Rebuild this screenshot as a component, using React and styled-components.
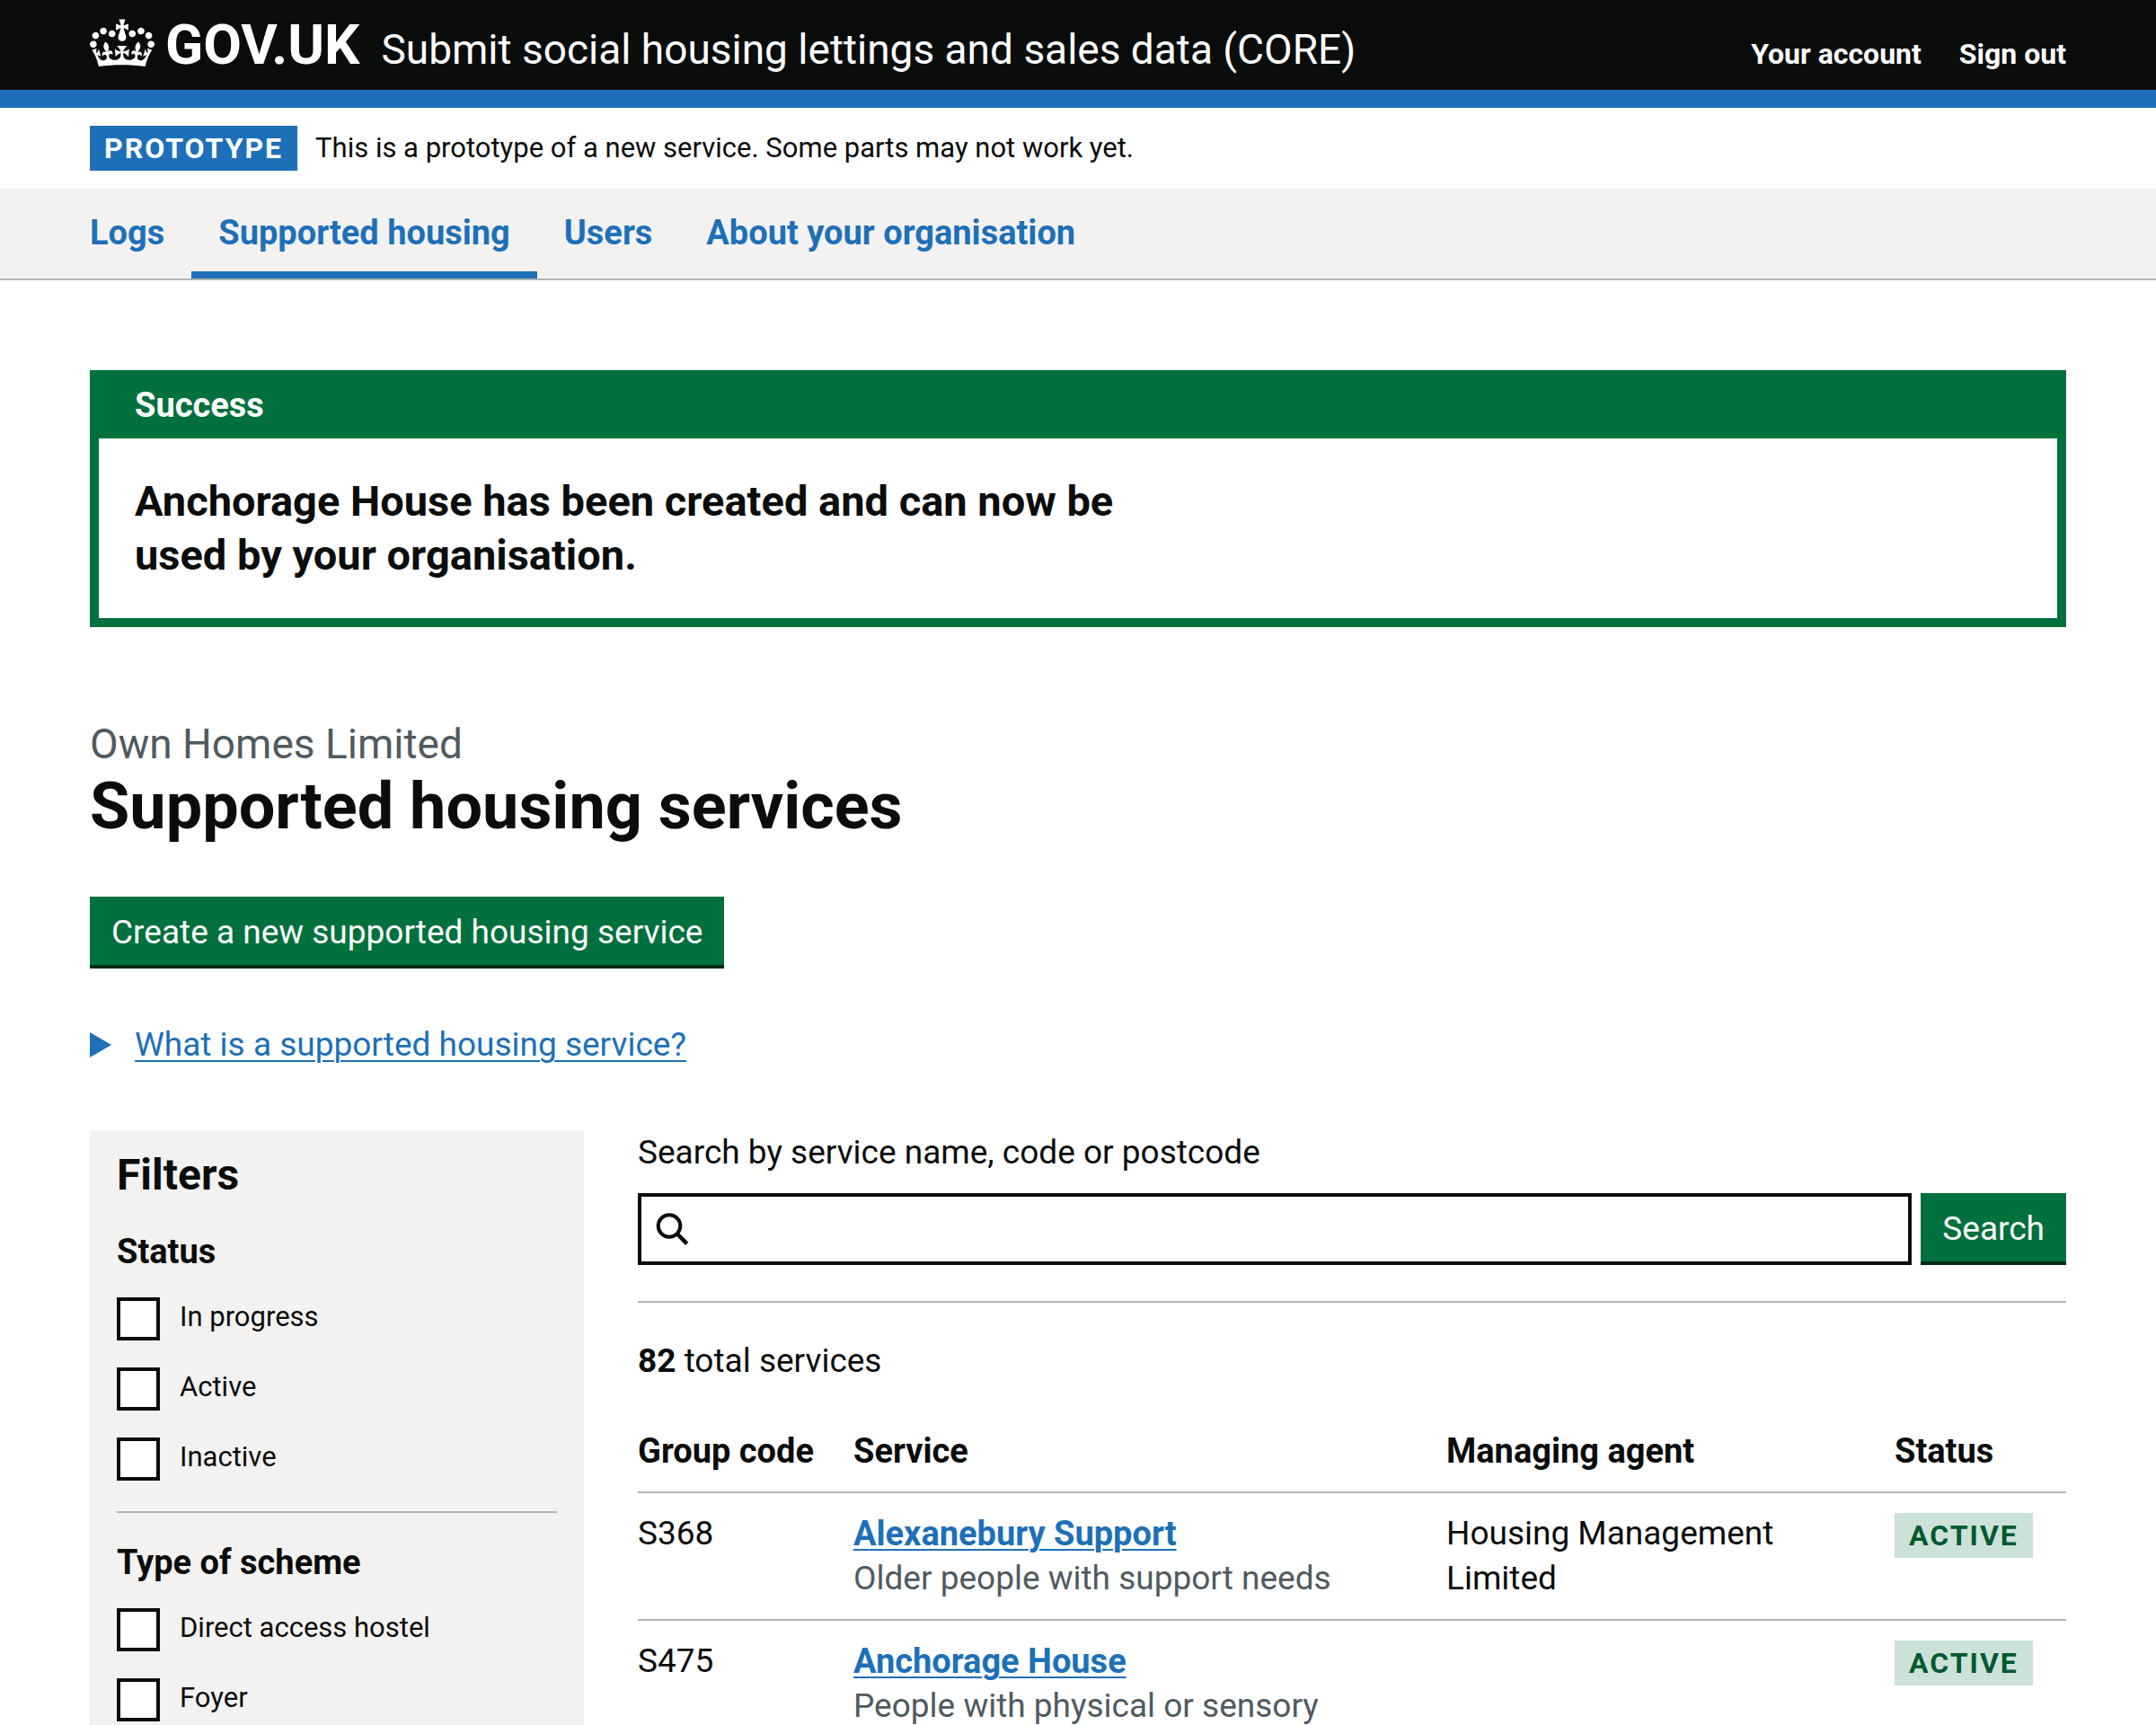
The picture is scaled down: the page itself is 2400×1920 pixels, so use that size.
import React from "react";
import styled, { createGlobalStyle } from "styled-components";

const colour = {
  black: "#0b0c0c",
  white: "#ffffff",
  blue: "#1d70b8",
  grey: "#f3f2f1",
  border: "#b1b4b6",
  secondary: "#505a5f",
  green: "#00703c",
  greenShadow: "#002d18",
  tagGreen: "#cce2d8",
  tagGreenText: "#005a30",
};

const GlobalStyle = createGlobalStyle`
  *, *::before, *::after { box-sizing: border-box; }
  body {
    margin: 0;
    background: ${colour.white};
    color: ${colour.black};
    font-family: Roboto, "Liberation Sans", Arial, sans-serif;
    font-size: 37px;
    line-height: 50px;
  }
  h1, h2, h3, p, ul, fieldset { margin: 0; padding: 0; border: 0; }
  button, input { font: inherit; color: inherit; }
`;

const Container = styled.div`
  padding: 0 100px;
`;

const Header = styled.header`
  background: ${colour.black};
  color: ${colour.white};
  border-bottom: 20px solid ${colour.blue};
`;

const HeaderRow = styled(Container)`
  display: flex;
  align-items: baseline;
  padding-top: 20px;
  padding-bottom: 20px;
`;

const HomeLink = styled.a`
  display: flex;
  align-items: baseline;
  gap: 12px;
  color: inherit;
  font-size: 62px;
  font-weight: 700;
  line-height: 60px;
  text-decoration: none;
`;

const CrownIcon = styled.svg`
  align-self: flex-start;
  width: 72px;
  height: 56px;
  fill: currentColor;
`;

const ServiceName = styled.a`
  margin-left: 24px;
  color: inherit;
  font-size: 46px;
  line-height: 50px;
  text-decoration: none;
`;

const AccountNav = styled.nav`
  display: flex;
  gap: 42px;
  margin-left: auto;
`;

const AccountLink = styled.a`
  color: inherit;
  font-size: 32px;
  font-weight: 700;
  line-height: 40px;
  text-decoration: none;
`;

const PhaseBanner = styled(Container)`
  display: flex;
  align-items: center;
  gap: 20px;
  padding-top: 20px;
  padding-bottom: 20px;
`;

const Tag = styled.strong`
  display: inline-block;
  padding: 0 16px;
  background: ${(p) => (p.$tone === "green" ? colour.tagGreen : colour.blue)};
  color: ${(p) => (p.$tone === "green" ? colour.tagGreenText : colour.white)};
  font-size: 32px;
  font-weight: 700;
  line-height: 50px;
  letter-spacing: 2px;
  text-transform: uppercase;
  vertical-align: top;
`;

const PhaseText = styled.p`
  font-size: 31px;
  line-height: 50px;
`;

const PrimaryNav = styled.nav`
  background: ${colour.grey};
  border-bottom: 2px solid ${colour.border};
`;

const NavList = styled.ul`
  display: flex;
  padding: 0 70px;
  list-style: none;
`;

const NavLink = styled.a`
  display: block;
  padding: 24px 30px 18px;
  border-bottom: 8px solid ${(p) => (p.$current ? colour.blue : "transparent")};
  color: ${colour.blue};
  font-size: 38px;
  font-weight: 700;
  text-decoration: none;
`;

const Main = styled.main`
  padding: 100px 100px 60px;
`;

const Banner = styled.section`
  border: 10px solid ${colour.green};
  border-top: 0;
`;

const BannerTitle = styled.h2`
  padding: 14px 40px 12px;
  background: ${colour.green};
  color: ${colour.white};
  font-size: 38px;
  line-height: 50px;
`;

const BannerBody = styled.div`
  padding: 40px;
`;

const BannerText = styled.p`
  max-width: 1160px;
  font-size: 47px;
  font-weight: 700;
  line-height: 60px;
`;

const Caption = styled.p`
  margin-top: 100px;
  color: ${colour.secondary};
  font-size: 46px;
  line-height: 60px;
`;

const PageTitle = styled.h1`
  margin-bottom: 60px;
  font-size: 72px;
  line-height: 80px;
`;

const Button = styled.button`
  display: block;
  height: 80px;
  padding: 0 24px;
  border: 0;
  border-radius: 0;
  background: ${colour.green};
  box-shadow: inset 0 -4px 0 ${colour.greenShadow};
  color: ${colour.white};
  cursor: pointer;
`;

const Details = styled.details`
  margin: 60px 0 70px;
`;

const Summary = styled.summary`
  display: flex;
  align-items: center;
  color: ${colour.blue};
  cursor: pointer;
  list-style: none;

  &::before {
    content: "";
    width: 24px;
    height: 28px;
    margin-right: 26px;
    background: ${colour.blue};
    clip-path: polygon(0 0, 100% 50%, 0 100%);
  }
`;

const SummaryText = styled.span`
  text-decoration: underline;
  text-decoration-thickness: 2px;
  text-underline-offset: 5px;
`;

const Columns = styled.div`
  display: grid;
  grid-template-columns: 1fr 2.891fr;
  gap: 60px;
`;

const Filters = styled.aside`
  padding: 20px 30px 60px;
  background: ${colour.grey};
`;

const FiltersTitle = styled.h2`
  margin-bottom: 30px;
  font-size: 48px;
  line-height: 60px;
`;

const FilterGroup = styled.fieldset`
  min-width: 0;

  & + & {
    margin-top: 34px;
    padding-top: 30px;
    border-top: 2px solid ${colour.border};
  }
`;

const Legend = styled.legend`
  float: left;
  width: 100%;
  padding: 0;
  font-size: 38px;
  font-weight: 700;
`;

const Options = styled.div`
  clear: both;
  display: grid;
  gap: 30px;
  padding-top: 26px;
`;

const Option = styled.label`
  display: flex;
  align-items: flex-start;
  gap: 22px;
  font-size: 31px;
  line-height: 44px;
`;

const Checkbox = styled.input.attrs({ type: "checkbox" })`
  appearance: none;
  flex: none;
  width: 48px;
  height: 48px;
  margin: 0;
  border: 4px solid ${colour.black};
  background: ${colour.white};

  &:checked {
    background: ${colour.black};
    box-shadow: inset 0 0 0 6px ${colour.white};
  }
`;

const Results = styled.section`
  min-width: 0;
`;

const SearchForm = styled.form`
  padding-bottom: 40px;
  border-bottom: 2px solid ${colour.border};
`;

const SearchLabel = styled.label`
  display: block;
  margin-bottom: 20px;
`;

const SearchRow = styled.div`
  display: flex;
  gap: 10px;
`;

const SearchBox = styled.div`
  display: flex;
  flex: 1;
  align-items: center;
  gap: 14px;
  height: 80px;
  padding: 0 16px;
  border: 4px solid ${colour.black};
`;

const SearchIcon = styled.svg`
  flex: none;
  width: 38px;
  height: 38px;
  fill: none;
  stroke: ${colour.black};
`;

const SearchInput = styled.input`
  flex: 1;
  min-width: 0;
  padding: 0;
  border: 0;
  outline: 0;
  background: transparent;
`;

const Total = styled.p`
  margin: 40px 0 30px;
`;

const Table = styled.table`
  width: 100%;
  border-collapse: separate;
  border-spacing: 0;
  table-layout: fixed;
`;

const Cell = styled.td`
  padding: 20px 40px 20px 0;
  border-bottom: 2px solid ${colour.border};
  text-align: left;
  vertical-align: top;
`;

const HeadCell = styled(Cell).attrs({ as: "th", scope: "col" })`
  width: ${(p) => p.$width};
  font-size: 38px;
  white-space: nowrap;
`;

const StatusCell = styled(Cell)`
  padding: 22px 0 18px;
`;

const ServiceTitle = styled.div`
  font-size: 38px;
  font-weight: 700;
`;

const ServiceLink = styled.a`
  color: ${colour.blue};
  text-decoration: underline;
  text-decoration-thickness: 2px;
  text-underline-offset: 4px;
`;

const Hint = styled.div`
  color: ${colour.secondary};
`;

const navItems = ["Logs", "Supported housing", "Users", "About your organisation"];

const filterGroups = [
  { title: "Status", options: ["In progress", "Active", "Inactive"] },
  { title: "Type of scheme", options: ["Direct access hostel", "Foyer"] },
];

const services = [
  {
    code: "S368",
    name: "Alexanebury Support",
    clients: "Older people with support needs",
    agent: "Housing Management Limited",
    status: "Active",
  },
  {
    code: "S475",
    name: "Anchorage House",
    clients: "People with physical or sensory",
    agent: "",
    status: "Active",
  },
];

function Crown() {
  return (
    <CrownIcon viewBox="0 0 132 97" aria-hidden="true">
      <path d="M25 30.2c3.5 1.5 7.7-.2 9.1-3.7 1.5-3.6-.2-7.8-3.9-9.2-3.6-1.4-7.6.3-9.1 3.9-1.4 3.5.3 7.5 3.9 9zM9 39.5c3.6 1.5 7.8-.2 9.2-3.7 1.5-3.6-.2-7.8-3.9-9.1-3.6-1.5-7.6.2-9.1 3.8-1.4 3.5.3 7.5 3.8 9zM4.4 57.2c3.5 1.5 7.7-.2 9.1-3.8 1.5-3.6-.2-7.7-3.9-9.1-3.5-1.5-7.6.3-9.1 3.8-1.4 3.5.3 7.6 3.9 9.1zm38.3-21.4c3.5 1.5 7.7-.2 9.1-3.8 1.5-3.6-.2-7.7-3.9-9.1-3.6-1.5-7.6.3-9.1 3.8-1.3 3.6.4 7.7 3.9 9.1zm64.4-5.6c-3.6 1.5-7.8-.2-9.1-3.7-1.5-3.6.2-7.8 3.8-9.2 3.6-1.4 7.7.3 9.2 3.9 1.3 3.5-.4 7.5-3.9 9zm15.9 9.3c-3.6 1.5-7.7-.2-9.1-3.7-1.5-3.6.2-7.8 3.7-9.1 3.6-1.5 7.7.2 9.2 3.8 1.5 3.5-.3 7.5-3.8 9zm4.7 17.7c-3.6 1.5-7.8-.2-9.2-3.8-1.5-3.6.2-7.7 3.9-9.1 3.6-1.5 7.7.3 9.2 3.8 1.3 3.5-.4 7.6-3.9 9.1zM89.3 35.8c-3.6 1.5-7.8-.2-9.2-3.8-1.4-3.6.2-7.7 3.9-9.1 3.6-1.5 7.7.3 9.2 3.8 1.4 3.6-.3 7.7-3.9 9.1zM69.7 17.7l8.9 4.7V9.3l-8.9 2.8c-.2-.3-.5-.6-.9-.9L72.4 0H59.6l3.5 11.2c-.3.3-.6.5-.9.9l-8.8-2.8v13.1l8.8-4.7c.3.3.6.7.9.9l-5 15.4v.1c-.2.8-.4 1.6-.4 2.4 0 4.1 3.1 7.5 7 8.1h.2c.3 0 .7.1 1 .1.4 0 .7 0 1-.1h.2c4-.6 7.1-4.1 7.1-8.1 0-.8-.1-1.7-.4-2.4V34l-5.1-15.4c.4-.2.7-.6 1-.9zM66 92.8c16.9 0 32.8 1.1 47.1 3.2 4-16.9 8.9-26.7 14-33.5l-9.6-3.4c1 4.9 1.1 7.2 0 10.2-1.5-1.4-3-4.3-4.2-8.7L108.6 76c2.8-2 5-3.2 7.5-3.3-4.4 9.4-10 11.9-13.6 11.2-4.3-.8-6.3-4.6-5.6-7.9 1-4.7 5.7-5.9 8-.5 4.3-8.7-3-11.4-7.6-8.8 7.1-7.2 7.9-13.5 2.1-21.1-8 6.1-8.1 12.3-4.5 20.8-4.7-5.4-12.1-2.5-9.5 6.2 3.4-5.2 7.9-2 7.2 3.1-.6 4.3-6.4 7.8-13.5 7.2-10.3-.9-10.9-8-11.2-13.8 2.5-.5 7.1 1.8 11 7.3L80.2 60c-4.1 4.4-8 5.3-12.3 5.4 1.4-4.4 8-11.6 8-11.6H55.5s6.4 7.2 7.9 11.6c-4.2-.1-8-1-12.3-5.4l1.4 16.4c3.9-5.5 8.5-7.7 10.9-7.3-.3 5.8-.9 12.8-11.1 13.8-7.2.6-12.9-2.9-13.5-7.2-.7-5 3.8-8.3 7.1-3.1 2.7-8.7-4.6-11.6-9.4-6.2 3.7-8.5 3.6-14.7-4.6-20.8-5.8 7.6-5 13.9 2.2 21.1-4.7-2.6-11.9.1-7.7 8.8 2.3-5.5 7.1-4.2 8.1.5.7 3.3-1.3 7.1-5.7 7.9-3.5.7-9-1.8-13.5-11.2 2.5.1 4.7 1.3 7.5 3.3l-4.7-15.4c-1.2 4.4-2.7 7.2-4.3 8.7-1.1-3-.9-5.3 0-10.2l-9.5 3.4c5 6.9 9.9 16.7 14 33.5 14.8-2.1 30.8-3.2 47.7-3.2z" />
    </CrownIcon>
  );
}

function SiteHeader() {
  return (
    <Header>
      <HeaderRow>
        <HomeLink href="#">
          <Crown />
          GOV.UK
        </HomeLink>
        <ServiceName href="#">
          Submit social housing lettings and sales data (CORE)
        </ServiceName>
        <AccountNav>
          <AccountLink href="#">Your account</AccountLink>
          <AccountLink href="#">Sign out</AccountLink>
        </AccountNav>
      </HeaderRow>
    </Header>
  );
}

function FilterPanel() {
  return (
    <Filters>
      <FiltersTitle>Filters</FiltersTitle>
      {filterGroups.map((group) => (
        <FilterGroup key={group.title}>
          <Legend>{group.title}</Legend>
          <Options>
            {group.options.map((option) => (
              <Option key={option}>
                <Checkbox />
                {option}
              </Option>
            ))}
          </Options>
        </FilterGroup>
      ))}
    </Filters>
  );
}

function ServiceTable() {
  return (
    <Table>
      <thead>
        <tr>
          <HeadCell $width="240px">Group code</HeadCell>
          <HeadCell>Service</HeadCell>
          <HeadCell $width="499px">Managing agent</HeadCell>
          <HeadCell $width="191px">Status</HeadCell>
        </tr>
      </thead>
      <tbody>
        {services.map((service) => (
          <tr key={service.code}>
            <Cell>{service.code}</Cell>
            <Cell>
              <ServiceTitle>
                <ServiceLink href="#">{service.name}</ServiceLink>
              </ServiceTitle>
              <Hint>{service.clients}</Hint>
            </Cell>
            <Cell>{service.agent}</Cell>
            <StatusCell>
              <Tag $tone="green">{service.status}</Tag>
            </StatusCell>
          </tr>
        ))}
      </tbody>
    </Table>
  );
}

export default function App() {
  return (
    <>
      <GlobalStyle />
      <SiteHeader />
      <PhaseBanner>
        <Tag>Prototype</Tag>
        <PhaseText>
          This is a prototype of a new service. Some parts may not work yet.
        </PhaseText>
      </PhaseBanner>
      <PrimaryNav>
        <NavList>
          {navItems.map((item) => (
            <li key={item}>
              <NavLink href="#" $current={item === "Supported housing"}>
                {item}
              </NavLink>
            </li>
          ))}
        </NavList>
      </PrimaryNav>
      <Main>
        <Banner>
          <BannerTitle>Success</BannerTitle>
          <BannerBody>
            <BannerText>
              Anchorage House has been created and can now be used by your
              organisation.
            </BannerText>
          </BannerBody>
        </Banner>
        <Caption>Own Homes Limited</Caption>
        <PageTitle>Supported housing services</PageTitle>
        <Button type="button">Create a new supported housing service</Button>
        <Details>
          <Summary>
            <SummaryText>What is a supported housing service?</SummaryText>
          </Summary>
        </Details>
        <Columns>
          <FilterPanel />
          <Results>
            <SearchForm onSubmit={(event) => event.preventDefault()}>
              <SearchLabel htmlFor="search">
                Search by service name, code or postcode
              </SearchLabel>
              <SearchRow>
                <SearchBox>
                  <SearchIcon viewBox="0 0 38 38" aria-hidden="true">
                    <circle cx="15" cy="15.5" r="12.3" strokeWidth="4" />
                    <path d="M23.5 24L34.7 35.3" strokeWidth="4.6" />
                  </SearchIcon>
                  <SearchInput id="search" type="text" />
                </SearchBox>
                <Button type="submit">Search</Button>
              </SearchRow>
            </SearchForm>
            <Total>
              <strong>82</strong> total services
            </Total>
            <ServiceTable />
          </Results>
        </Columns>
      </Main>
    </>
  );
}
